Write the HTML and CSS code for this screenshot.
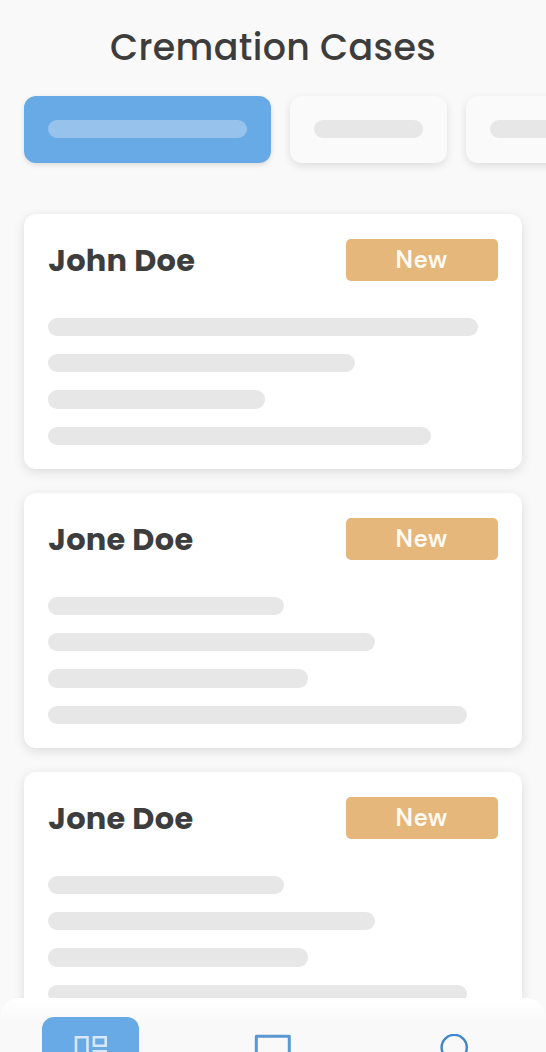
FILE: index.html
```html
<!DOCTYPE html>
<html lang="en">
<head>
<meta charset="utf-8">
<title>Cremation Cases</title>
<link rel="stylesheet" href="styles.css">
</head>
<body>
<div class="screen">
  <h1 class="title"><span>Cremation Cases</span></h1>
  <div class="tabs">
    <div class="tab tab-active"><i class="bar"></i></div>
    <div class="tab"><i class="bar"></i></div>
    <div class="tab"><i class="bar"></i></div>
  </div>
  <main class="cards">
    <article class="card">
      <header class="card-head"><h2 class="name">John Doe</h2><span class="badge">New</span></header>
      <div class="lines">
        <i class="bar" style="width:429.5px"></i>
        <i class="bar" style="width:306.5px"></i>
        <i class="bar" style="width:217px"></i>
        <i class="bar" style="width:382.5px"></i>
      </div>
    </article>
    <article class="card">
      <header class="card-head"><h2 class="name">Jone Doe</h2><span class="badge">New</span></header>
      <div class="lines">
        <i class="bar" style="width:235.3px"></i>
        <i class="bar" style="width:326.3px"></i>
        <i class="bar" style="width:259.3px"></i>
        <i class="bar" style="width:418.5px"></i>
      </div>
    </article>
    <article class="card">
      <header class="card-head"><h2 class="name">Jone Doe</h2><span class="badge">New</span></header>
      <div class="lines">
        <i class="bar" style="width:235.3px"></i>
        <i class="bar" style="width:326.3px"></i>
        <i class="bar" style="width:259.3px"></i>
        <i class="bar" style="width:418.5px"></i>
      </div>
    </article>
  </main>
  <nav class="nav">
    <div class="nav-item nav-active">
      <svg class="icon" width="36" height="36" viewBox="0 0 36 36" fill="none" stroke="#d9e8f6" stroke-width="2.6"><path d="M3 3.3h11.5v18H3zM20.9 3.3h11.8v8.5H20.9zM20.9 17.3h11.8v16H20.9zM3 26.8h11.5v6.5H3z"/></svg>
    </div>
    <div class="nav-item">
      <svg class="icon" width="38" height="36" viewBox="0 0 38 36" fill="none" stroke="#5b98d2" stroke-width="3" stroke-linejoin="round"><path d="M2.3 2.2h33v28h-33z"/></svg>
    </div>
    <div class="nav-item">
      <svg class="icon" width="36" height="36" viewBox="0 0 36 36" fill="none" stroke="#3f86cb" stroke-width="2.4"><circle cx="17.2" cy="13.5" r="12.6"/></svg>
    </div>
  </nav>
</div>
</body>
</html>
```
FILE: styles.css
```css
* { box-sizing: border-box; margin: 0; }
body { background: #f9f9f9; color: #3d3d3d; font-family: Poppins, Inter, sans-serif; }
.screen { position: relative; width: 546px; height: 1052px; overflow: hidden; }
.title { height: 96px; padding-top: 26px; text-align: center; font-size: 36.4px; line-height: 44px; font-weight: 500; letter-spacing: .36px; }
.tabs { display: flex; gap: 18.5px; padding-left: 24px; width: 720px; height: 118.3px; align-items: flex-start; }
.tab { width: 157.5px; height: 67px; padding: 24px; border-radius: 12px; background: #fafafa; box-shadow: 0 3px 9px rgba(0, 0, 0, .11); flex: none; }
.tab-active { width: 247.4px; background: #68aae5; box-shadow: 0 2px 5px rgba(0, 0, 0, .12); }
.bar { display: block; height: 18.2px; border-radius: 9.1px; background: #e7e7e7; }
.tab-active .bar { background: #96c2eb; }
.cards { display: flex; flex-direction: column; gap: 24px; padding: 0 24px; }
.card { height: 255px; padding: 24.3px 24.3px 0; background: #fff; border-radius: 12px; box-shadow: 0 3px 12px rgba(0, 0, 0, .12); }
.card-head { display: flex; justify-content: space-between; height: 42.5px; }
.name { font-size: 30.4px; line-height: 43.6px; font-weight: 700; letter-spacing: .3px; white-space: nowrap; }
.badge { width: 152px; height: 42.5px; border-radius: 5px; background: #e5b77a; color: #fffaf2; font-family: "DM Sans", Inter, sans-serif; font-size: 24.3px; line-height: 42px; font-weight: 600; letter-spacing: .5px; text-align: center; }
.lines { display: flex; flex-direction: column; gap: 18.2px; padding-top: 36.5px; }
.nav { position: absolute; left: 0; right: 0; top: 998px; height: 54px; display: flex; justify-content: space-between; padding: 18.5px 42px 0 42.4px; border-radius: 20px 20px 0 0; background: linear-gradient(#fff, #f9f9f9 24px); overflow: hidden; }
.nav-item { width: 97px; height: 80px; padding-top: 17px; display: flex; justify-content: center; align-items: flex-start; flex: none; }
.nav-active { border-radius: 12px; background: #68aae5; }
.icon { flex: none; }
```
